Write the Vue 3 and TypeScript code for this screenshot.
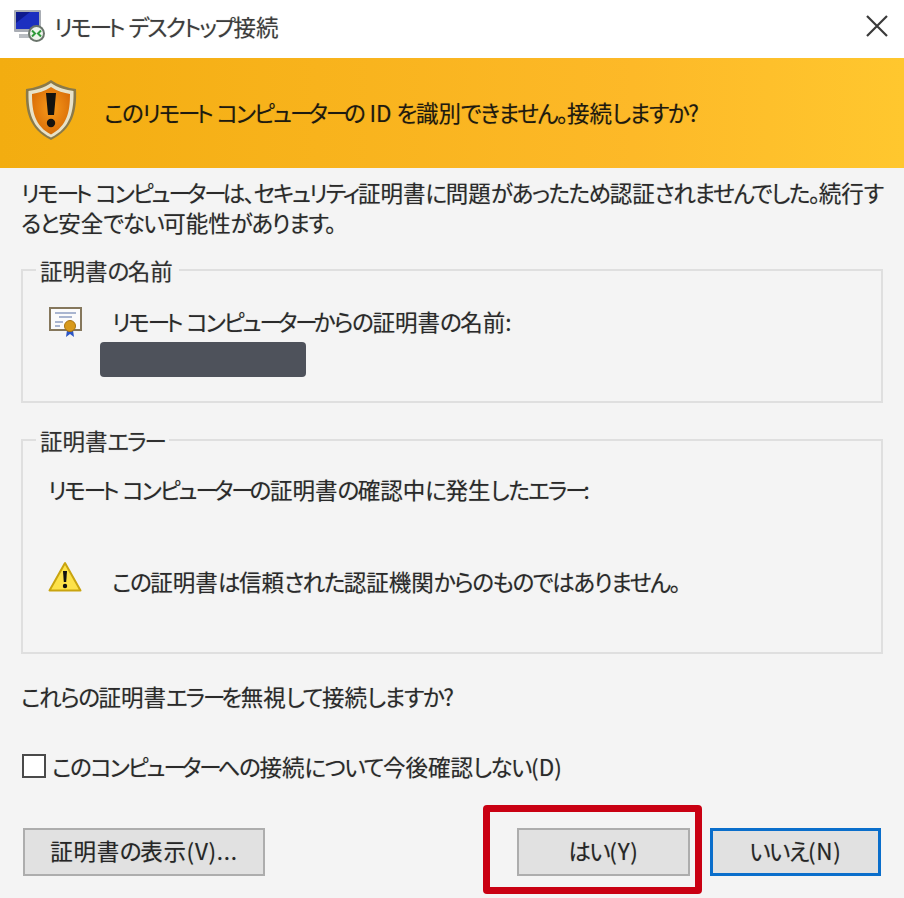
<script setup lang="ts">
import { h } from 'vue'
import type { FunctionalComponent } from 'vue'

// The reference font has narrow kana next to full-width kanji, so each kind of run gets its own tracking.
const RUNS = /ー+|[\u30a0-\u30fb\u30fd-\u30ff]+|[\u3040-\u309f、。]+|[^\u3040-\u30ff、。]+/g

function runClass(run: string): string | undefined {
  if (run.startsWith('ー')) return 'jp-bar'
  if (/^[\u30a0-\u30ff]/.test(run)) return 'jp-kata'
  if (/^[\u3040-\u309f、。]/.test(run)) return 'jp-hira'
  return undefined
}

const Jp: FunctionalComponent<{ t: string }> = (props) =>
  (props.t.match(RUNS) ?? []).map((run) => h('span', { class: runClass(run) }, run))
Jp.props = ['t']
</script>

<template>
  <div class="dialog">
    <header class="titlebar">
      <svg class="app-icon" width="32" height="33" viewBox="0 0 32 33">
        <rect x="0" y="0" width="27" height="22" rx="1" fill="#a9adb4" />
        <rect x="2" y="2" width="23" height="17" fill="#1c2fc0" />
        <path d="M2 2h14L2 13z" fill="#0e1a8e" />
        <rect x="5" y="24" width="18" height="4" fill="#b9bdc2" />
        <circle cx="22.500" cy="23.500" r="8.500" fill="#6a746b" />
        <circle cx="22.500" cy="23.500" r="6.500" fill="#eef4ec" />
        <path d="M18 20.500l3 3-3 3M27 20.500l-3 3 3 3" fill="none" stroke="#2f9a3a" stroke-width="2" />
      </svg>
      <span class="title"><Jp t="リモート デスクトップ接続" /></span>
      <svg class="close" width="22" height="22" viewBox="0 0 22 22">
        <path d="M1 1l20 20M21 1L1 21" stroke="#3a3a3a" stroke-width="2.200" />
      </svg>
    </header>

    <div class="banner">
      <svg class="shield" width="54" height="62" viewBox="0 0 54 62">
        <defs>
          <radialGradient id="shieldFill" cx="50%" cy="45%" r="60%">
            <stop offset="0" stop-color="#f89a1a" />
            <stop offset="1" stop-color="#d76a06" />
          </radialGradient>
        </defs>
        <path d="M27 1C20 6 10 9 2 10c-1 22 3 40 25 51 22-11 26-29 25-51C44 9 34 6 27 1z" fill="#8a7a4a" />
        <path d="M27 4C20 9 12 11 4.500 12c-.5 20 3 37 22.500 46.500C46.500 49 50 32 49.500 12 42 11 34 9 27 4z" fill="#e8e2c8" />
        <path d="M27 8C21 12 14 14 8 15c0 18 3 32 19 40.500C43 47 46 33 46 15c-6-1-13-3-19-7z" fill="url(#shieldFill)" />
        <path d="M22 14h10l-2 22h-6z" fill="#15130f" />
        <circle cx="27" cy="44" r="4.200" fill="#15130f" />
      </svg>
      <span class="banner-text"><Jp t="このリモート コンピューターの ID を識別できません。接続しますか?" /></span>
    </div>

    <main class="content">
      <p class="intro">
        <span class="line"><Jp t="リモート コンピューターは、セキュリティ証明書に問題があったため認証されませんでした。続行す" /></span>
        <span class="line"><Jp t="ると安全でない可能性があります。" /></span>
      </p>

      <fieldset class="group name-group">
        <legend><Jp t="証明書の名前" /></legend>
        <div class="cert-row">
          <svg class="cert-icon" width="34" height="30" viewBox="0 0 34 30">
            <rect x="1" y="1" width="31" height="22" fill="#fbfbfb" stroke="#85775c" stroke-width="2" />
            <path d="M6 6h21M10 10h13M6 15h8M6 19h5" stroke="#8f9fc2" stroke-width="1.500" />
            <path d="M18 23l-1 7 4-3 4 3-1-7z" fill="#2b55c4" />
            <circle cx="21" cy="19" r="5.500" fill="#d89a1c" stroke="#a8720f" />
          </svg>
          <div class="cert-lines">
            <span class="cert-label"><Jp t="リモート コンピューターからの証明書の名前:" /></span>
            <div class="redacted"></div>
          </div>
        </div>
      </fieldset>

      <fieldset class="group error-group">
        <legend><Jp t="証明書エラー" /></legend>
        <p class="error-lead"><Jp t="リモート コンピューターの証明書の確認中に発生したエラー:" /></p>
        <div class="error-row">
          <svg width="34" height="32" viewBox="0 0 34 32">
            <path d="M17 2L1.500 29.500h31z" fill="#fde24a" stroke="#c9a40f" stroke-width="2" stroke-linejoin="round" />
            <path d="M15 10h4l-.8 11h-2.400z" fill="#111" />
            <circle cx="17" cy="25" r="2.200" fill="#111" />
          </svg>
          <span class="error-text"><Jp t="この証明書は信頼された認証機関からのものではありません。" /></span>
        </div>
      </fieldset>

      <p class="question"><Jp t="これらの証明書エラーを無視して接続しますか?" /></p>

      <label class="check">
        <span class="box"></span>
        <span><Jp t="このコンピューターへの接続について今後確認しない(D)" /></span>
      </label>

      <footer class="actions">
        <button class="btn view" type="button"><Jp t="証明書の表示(V)..." /></button>
        <div class="yes-no">
          <button class="btn yes" type="button"><Jp t="はい(Y)" /></button>
          <button class="btn no" type="button"><Jp t="いいえ(N)" /></button>
        </div>
      </footer>
    </main>

    <div class="highlight"></div>
  </div>
</template>

<style>
html, body { margin: 0; background: #f4f4f4; }
.jp-kata { letter-spacing: -2px; }
.jp-bar { letter-spacing: -4px; }
.jp-hira { letter-spacing: -1.4px; }
</style>

<style scoped>
.dialog {
  position: relative;
  width: 904px;
  height: 898px;
  overflow: hidden;
  background: #f4f4f4;
  color: #2a2a2a;
  font-family: "Noto Sans CJK JP", "Noto Sans", sans-serif;
  font-size: 22.5px;
  font-feature-settings: "palt";
  line-height: 30px;
  text-shadow: 0 0 1px rgba(0, 0, 0, 0.3);
}
.titlebar {
  height: 58px;
  background: #fff;
  display: flex;
  align-items: center;
  padding: 0 16px 0 14px;
  box-sizing: border-box;
}
.app-icon { margin-right: 8px; margin-top: -6px; }
.title { flex: 1; color: #3d3d3d; margin-top: -6px; }
.close { margin-top: -6px; }
.banner {
  height: 110px;
  display: flex;
  align-items: center;
  padding-left: 24px;
  box-sizing: border-box;
  background: linear-gradient(90deg, #f3ad10 0%, #fdb928 70%, #ffc72e 100%);
}
.shield { margin-top: -6px; }
.banner-text { margin-left: 26px; margin-top: -2px; color: #1d1a10; }
.content { padding: 9px 21px 0; }
p { margin: 0; }
.line { display: block; white-space: nowrap; }
.group {
  margin: 0;
  padding: 0;
  border: 2px solid #dfdfdf;
  width: 862px;
  box-sizing: border-box;
  min-width: 0;
}
.group legend {
  margin-left: 13px;
  padding: 0 6px 0 4px;
  line-height: 30px;
  color: #303030;
}
.name-group { height: 148px; margin-top: 18px; }
.error-group { height: 229px; margin-top: 22px; }
.cert-row { display: flex; padding: 20px 0 0 26px; }
.cert-icon { margin-top: 2px; }
.cert-lines { margin-left: 17px; margin-top: 1px; }
.cert-label { display: block; margin-left: 12px; }
.redacted {
  width: 206px;
  height: 35px;
  margin-top: 6px;
  background: #4e525b;
  border-radius: 4px;
}
.error-lead { padding: 19px 0 0 25px; }
.error-row { display: flex; align-items: flex-start; padding: 57px 0 0 25px; }
.error-text { margin-left: 30px; margin-top: 5px; }
.question { margin-top: 27px; }
.check {
  display: flex;
  align-items: center;
  margin-top: 40px;
  margin-left: 1px;
}
.box {
  width: 24px;
  height: 24px;
  box-sizing: border-box;
  background: #fff;
  border: 2px solid #4a4a4a;
  margin-right: 6px;
}
.actions {
  display: flex;
  justify-content: space-between;
  margin-top: 47px;
  padding: 0 2px;
}
.yes-no { display: flex; gap: 20px; }
.btn {
  height: 48px;
  padding: 0 0 5px;
  box-sizing: border-box;
  font: inherit;
  font-feature-settings: inherit;
  letter-spacing: 0.7px;
  color: #262626;
  background: #e1e1e1;
  border: 2px solid #adadad;
  text-shadow: inherit;
}
.view { width: 242px; }
.yes { width: 173px; }
.no { width: 171px; border: 3px solid #0a6ecb; }
.highlight {
  position: absolute;
  left: 483px;
  top: 805px;
  width: 219px;
  height: 89px;
  box-sizing: border-box;
  border: 7px solid #c90012;
  border-radius: 4px;
}
</style>
